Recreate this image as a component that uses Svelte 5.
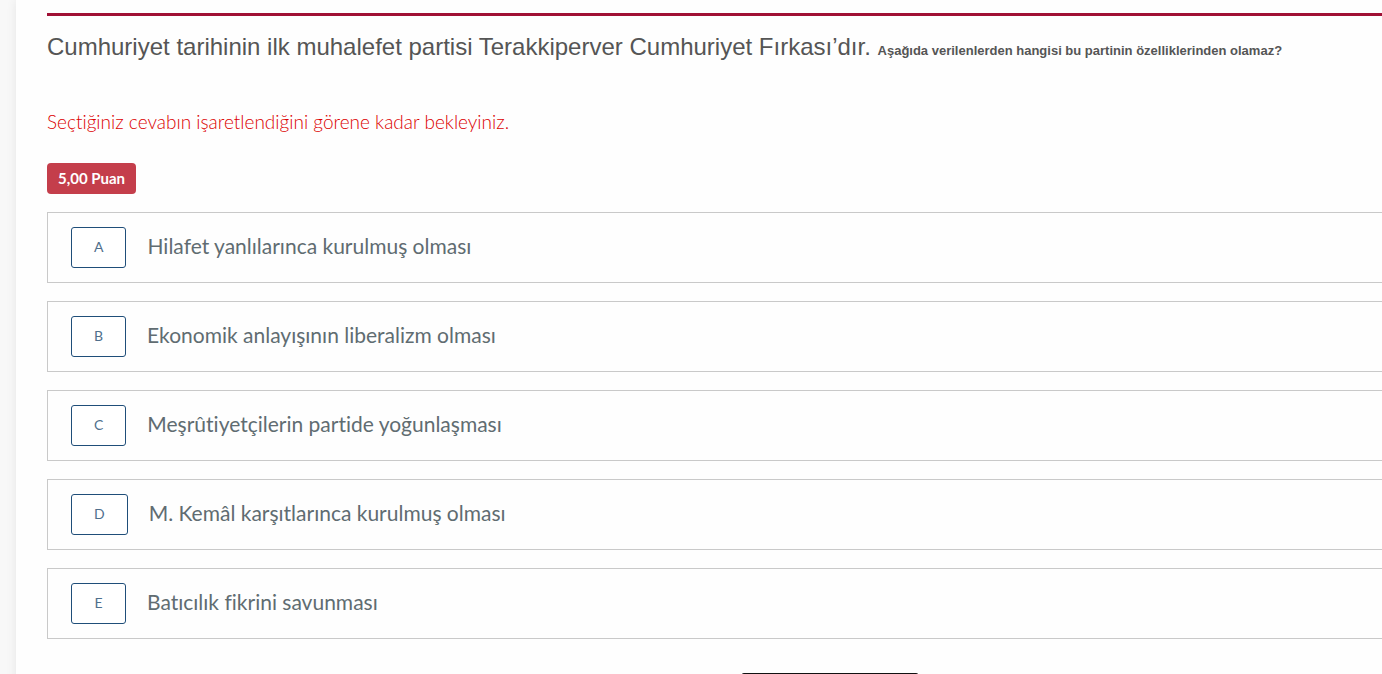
<script>
  const options = [
    { key: 'A', text: 'Hilafet yanlılarınca kurulmuş olması' },
    { key: 'B', text: 'Ekonomik anlayışının liberalizm olması' },
    { key: 'C', text: 'Meşrûtiyetçilerin partide yoğunlaşması' },
    { key: 'D', text: 'M. Kemâl karşıtlarınca kurulmuş olması' },
    { key: 'E', text: 'Batıcılık fikrini savunması' }
  ];
  let selected = $state(null);
</script>

<div class="page">
  <main>
    <h1>
      Cumhuriyet tarihinin ilk muhalefet partisi Terakkiperver Cumhuriyet Fırkası’dır.
      <strong>Aşağıda verilenlerden hangisi bu partinin özelliklerinden olamaz?</strong>
    </h1>
    <p class="notice">Seçtiğiniz cevabın işaretlendiğini görene kadar bekleyiniz.</p>
    <span class="badge">5,00 Puan</span>
    <ul>
      {#each options as option (option.key)}
        <li>
          <button
            id={`option-${option.key}`}
            class="key"
            type="button"
            aria-pressed={selected === option.key}
            onclick={() => (selected = option.key)}>{option.key}</button>
          <label for={`option-${option.key}`}>{option.text}</label>
        </li>
      {/each}
    </ul>
    <button class="next" type="button" aria-label="Sonraki"></button>
  </main>
</div>

<style>
  :global(body) {
    margin: 0;
    background: #f8f8f8;
  }

  .page {
    box-sizing: border-box;
    height: 100vh;
    overflow: hidden;
    padding: 0 0 0 16px;
    font-family: Lato, "Open Sans", sans-serif;
    font-variant-ligatures: none;
  }

  main {
    display: flex;
    flex-direction: column;
    align-items: flex-start;
    box-sizing: border-box;
    min-height: 100%;
    padding: 13px 0 0 31px;
    background: #fefefe;
    box-shadow: 0 0 10px rgba(0, 0, 0, 0.08);
  }

  h1 {
    align-self: stretch;
    margin: 0;
    padding-top: 15px;
    border-top: 3px solid #a01035;
    color: #555;
    font: 400 24px/32px "Liberation Sans", Arial, sans-serif;
  }

  strong {
    font-size: 13px;
    font-weight: 700;
  }

  .notice {
    margin: 42px 0 0;
    color: #dc0000;
    font-size: 19px;
    font-weight: 300;
    line-height: 26px;
  }

  .badge {
    margin-top: 28px;
    padding: 0 11px;
    border-radius: 4px;
    background: #c43e4b;
    color: #fff;
    font-size: 15px;
    font-weight: 700;
    line-height: 31px;
  }

  ul {
    display: flex;
    flex-direction: column;
    gap: 18px;
    align-self: stretch;
    margin: 18px 0 0;
    padding: 0;
    list-style: none;
  }

  li {
    display: flex;
    align-items: center;
    gap: 21px;
    padding: 14px 23px;
    border: 1px solid #c9c9c9;
    border-right: 0;
  }

  .key {
    box-sizing: border-box;
    min-width: 55px;
    height: 41px;
    padding: 0 22px 2px;
    border: 1px solid #1f4e79;
    border-radius: 3px;
    background: #fff;
    color: #4f6f8c;
    font: 400 14px/20px Lato, "Open Sans", sans-serif;
  }

  label {
    padding-bottom: 4px;
    color: #606c71;
    font-size: 21px;
    font-weight: 400;
    line-height: 28px;
  }

  .next {
    flex: none;
    width: 178px;
    height: 40px;
    margin: 34px 0 0 52%;
    padding: 0;
    border: 1px solid #111;
    border-radius: 3px;
    background: #111;
  }
</style>
